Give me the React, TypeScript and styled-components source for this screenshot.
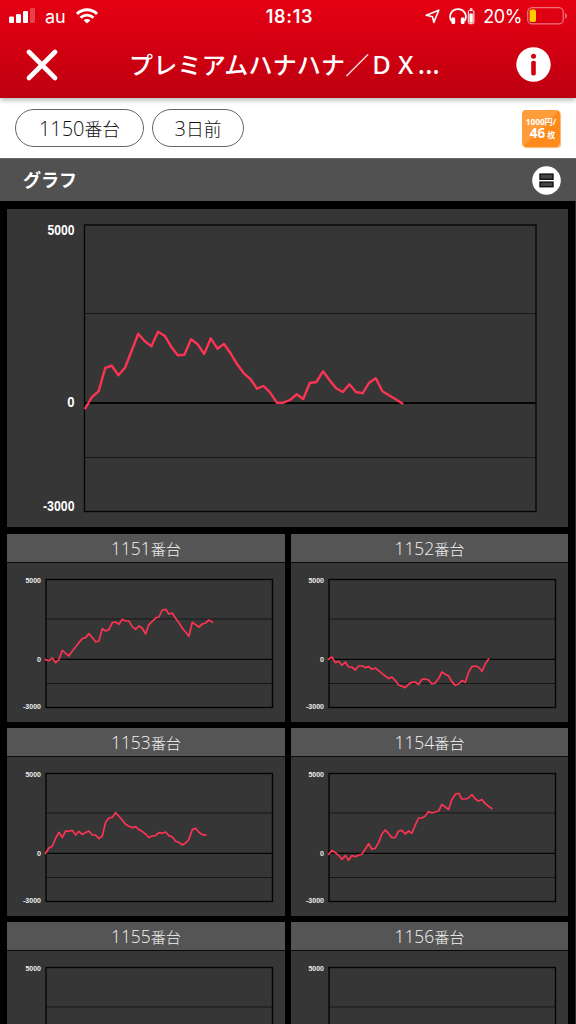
import React from "react";
import styled, { createGlobalStyle } from "styled-components";

const GlobalStyle = createGlobalStyle`
  * { box-sizing: border-box; }
  html, body { margin: 0; height: 1024px; overflow: hidden; background: #000; }
  body { font-family: Inter, "Noto Sans CJK JP", sans-serif; }
  svg { display: block; flex: none; }
`;

const Screen = styled.div`
  width: 576px;
  height: 1024px;
  overflow: hidden;
  display: flex;
  flex-direction: column;
  background: #000;
`;

const Header = styled.header`
  flex: none;
  height: 98px;
  background: linear-gradient(#e60013, #bd0010);
  border-bottom: 1px solid #b0000c;
  box-shadow: 0 2px 5px rgba(0, 0, 0, 0.3);
  position: relative;
  z-index: 1;
  color: #fff;
`;

const StatusBar = styled.div`
  height: 32px;
  display: grid;
  grid-template-columns: 1fr auto 1fr;
  align-items: center;
  padding: 0 8px 0 9px;
`;

const StatusGroup = styled.div<{ $end?: boolean }>`
  display: flex;
  align-items: center;
  justify-content: ${(p) => (p.$end ? "flex-end" : "flex-start")};
`;

const Carrier = styled.span`
  font-size: 18px;
  line-height: 30px;
  padding-top: 2px;
  margin: 0 11px 0 10px;
  letter-spacing: -0.2px;
`;

const Clock = styled.span`
  font-size: 18px;
  font-weight: 600;
  line-height: 30px;
  letter-spacing: 0.7px;
  padding: 2px 0 0 2px;
`;

const BatteryText = styled.span`
  font-size: 18px;
  line-height: 30px;
  padding-top: 2px;
  margin: 0 5px 0 8px;
  letter-spacing: -0.4px;
`;

const IconGap = styled.span`
  width: 9px;
`;

const NavBar = styled.div`
  height: 65px;
  display: grid;
  grid-template-columns: 44px 1fr 44px;
  align-items: center;
  padding: 0 21px 0 20px;
`;

const Title = styled.h1`
  margin: 0;
  padding: 0 6px 2px 0;
  font: 500 24px/36px "Noto Sans CJK JP", sans-serif;
  letter-spacing: 0.2px;
  text-align: center;
  white-space: nowrap;
`;

const NavButton = styled.button`
  border: 0;
  padding: 0;
  background: none;
  display: flex;
  justify-content: center;
`;

const FilterBar = styled.div`
  flex: none;
  height: 60px;
  background: #fff;
  display: flex;
  align-items: center;
  gap: 8px;
  padding: 0 16px 0 15px;
`;

const Digits = styled.span<{ $size: number }>`
  font-family: "Open Sans", sans-serif;
  font-weight: 300;
  font-size: ${(p) => p.$size}px;
  letter-spacing: 0;
`;

const Pill = styled.button<{ $width: number }>`
  width: ${(p) => p.$width}px;
  height: 38px;
  padding: 0;
  border: 1px solid #666;
  border-radius: 19px;
  background: #fff;
  color: #111;
  font: 300 17.8px/36px "Noto Sans CJK JP", sans-serif;
`;

const RateBadge = styled.div`
  width: 38px;
  height: 37px;
  margin-left: auto;
  padding-top: 6px;
  border-radius: 4px;
  background: linear-gradient(135deg, #ff9d3c 50%, #ff8a1c 50%);
  box-shadow: 1px 1px 1px #f3b777;
  color: #fff;
  text-align: center;
  font-family: "Open Sans", "Noto Sans CJK JP", sans-serif;
  font-weight: 700;
`;

const RatePrice = styled.div`
  font-size: 8.2px;
  line-height: 12px;
  white-space: nowrap;
`;

const RateCount = styled.div`
  display: flex;
  align-items: baseline;
  justify-content: center;
  gap: 2px;
  padding-left: 3px;
  font-size: 13.5px;
  line-height: 11px;
`;

const RateUnit = styled.span`
  font-size: 8px;
`;

const SectionBar = styled.div`
  flex: none;
  height: 43px;
  background: #515151;
  border-top: 1px solid #6b6b6b;
  display: flex;
  align-items: center;
  justify-content: space-between;
  padding: 0 15px 0 23px;
`;

const SectionTitle = styled.h2`
  margin: 0;
  padding-bottom: 3px;
  color: #fff;
  font: 700 18px/26px "Noto Sans CJK JP", sans-serif;
`;

const Board = styled.main`
  flex: none;
  padding: 8px 7px 0 7px;
  border-right: 1px solid #2c2c2c;
  display: flex;
  flex-direction: column;
  gap: 7px;
`;

const MainPanel = styled.section`
  height: 318px;
  background: #363636;
`;

const PanelGrid = styled.div`
  display: grid;
  grid-template-columns: 278px 277px;
  column-gap: 6px;
  row-gap: 6px;
`;

const Panel = styled.section`
  height: 188px;
  background: #363636;

  &:nth-child(even) svg {
    margin-left: -0.7px;
  }
`;

const PanelTitle = styled.h3`
  margin: 0;
  height: 29px;
  background: #555;
  border-bottom: 1px solid #0a0a0a;
  color: #f2f2f2;
  text-align: center;
  font: 300 15.2px/28px "Noto Sans CJK JP", sans-serif;
`;

const AxisLabel = styled.text<{ $large?: boolean }>`
  font-family: "Liberation Sans", sans-serif;
  font-weight: 700;
  font-size: ${(p) => (p.$large ? 14 : 7.8)}px;
  fill: ${(p) => (p.$large ? "#fff" : "#eee")};
`;

type ChartSpec = {
  width: number;
  height: number;
  left: number;
  right: number;
  top: number;
  upper: number;
  zero: number;
  lower: number;
  bottom: number;
  step: number;
  labelX: number;
  labelWidths: [number, number, number];
  labelY: [number, number, number];
  large?: boolean;
};

const LARGE: ChartSpec = {
  width: 561, height: 318, left: 77.5, right: 529, top: 16, upper: 104.5, zero: 194,
  lower: 248.5, bottom: 302.5, step: 6.6, labelX: 67.5, labelWidths: [27, 7.3, 31.5],
  labelY: [25.5, 198, 302], large: true,
};

const SMALL: ChartSpec = {
  width: 278, height: 159, left: 39, right: 265.5, top: 16.5, upper: 56, zero: 96.3,
  lower: 120.5, bottom: 144.5, step: 3.333, labelX: 34, labelWidths: [15.5, 4, 18],
  labelY: [20.4, 99, 145.6],
};

// Line heights are measured from the zero line, three units to a pixel.
const MAIN_DATA = [
  -15, 18, 35, 105, 112, 83, 106, 156, 208, 185, 170, 214, 202, 169, 143, 145, 191, 176, 147, 194,
  163, 177, 149, 116, 89, 72, 43, 51, 31, 1, 1, 9, 26, 12, 60, 63, 95, 68, 44, 33, 56, 33, 29, 61,
  74, 35, 23, 11, -1,
];

const MACHINES: { id: string; data: number[] }[] = [
  {
    id: "1151",
    data: [
      -1, -4, 4, -10, -1, 27, 18, 10, 25, 37, 50, 62, 65, 77, 65, 52, 55, 92, 85, 89, 110, 112, 105,
      120, 115, 115, 98, 90, 100, 93, 76, 104, 114, 124, 127, 148, 150, 136, 139, 123, 110, 93, 82,
      69, 111, 104, 97, 106, 109, 118, 111,
    ],
  },
  {
    id: "1152",
    data: [
      0, 7, -10, -6, -18, -8, -23, -23, -32, -20, -20, -25, -22, -30, -26, -34, -42, -50, -58, -53,
      -64, -77, -81, -85, -75, -69, -68, -76, -60, -59, -62, -74, -71, -58, -38, -45, -50, -67, -78,
      -74, -64, -69, -39, -22, -20, -24, -36, -14, 1,
    ],
  },
  {
    id: "1153",
    data: [
      0, 16, 21, 45, 63, 47, 67, 66, 69, 55, 66, 56, 62, 67, 55, 55, 44, 52, 93, 106, 108, 122, 111,
      100, 87, 81, 77, 80, 71, 65, 58, 47, 52, 53, 62, 60, 64, 53, 49, 36, 33, 25, 31, 41, 71, 75,
      63, 56, 55,
    ],
  },
  {
    id: "1154",
    data: [
      -3, 8, 2, -6, -18, -7, -21, -7, -10, -6, -3, 13, 29, 12, 15, 32, 58, 70, 59, 47, 48, 67, 69,
      58, 67, 60, 85, 106, 106, 112, 125, 121, 124, 127, 147, 139, 131, 161, 177, 180, 163, 163,
      166, 176, 163, 157, 161, 149, 141, 134,
    ],
  },
  { id: "1155", data: [] },
  { id: "1156", data: [] },
];

function Chart({ spec, data }: { spec: ChartSpec; data: number[] }) {
  const s = spec;
  const labels = ["5000", "0", "-3000"];
  const startX = s.large ? 78.4 : 38.6;
  const points = data.map((v, i) => `${(startX + i * s.step).toFixed(1)},${(s.zero - v / 3).toFixed(1)}`).join(" ");
  return (
    <svg width={s.width} height={s.height} viewBox={`0 0 ${s.width} ${s.height}`}>
      <g fill="none" stroke="#050505">
        <path d={`M${s.left} ${s.upper}H${s.right}M${s.left} ${s.lower}H${s.right}`} strokeWidth="1" stroke="#171717" />
        <path d={`M${s.left} ${s.zero}H${s.right}`} strokeWidth={s.large ? 1.8 : 1.2} />
        <rect x={s.left} y={s.top} width={s.right - s.left} height={s.bottom - s.top} strokeWidth={s.large ? 1.3 : 1.4} />
      </g>
      {labels.map((label, i) => (
        <AxisLabel key={label} $large={s.large} x={s.labelX - s.labelWidths[i]} y={s.labelY[i]}
          textLength={s.labelWidths[i]} lengthAdjust="spacingAndGlyphs">
          {label}
        </AxisLabel>
      ))}
      <polyline points={points} fill="none" stroke="#fb3453" strokeWidth={s.large ? 2.4 : 1.7} strokeLinejoin="round" strokeLinecap="square" />
    </svg>
  );
}

const SignalIcon = () => (
  <svg width="26" height="16" viewBox="0 0 26 16" fill="#fff">
    <rect x="0" y="8.5" width="5" height="6.5" rx="1.3" />
    <rect x="7" y="6" width="5" height="9" rx="1.3" />
    <rect x="14" y="3" width="5" height="12" rx="1.3" />
    <rect x="21" y="0" width="5" height="15" rx="1.3" opacity="0.25" />
  </svg>
);

const WifiIcon = () => (
  <svg width="22" height="16" viewBox="0 0 22 16" fill="none" stroke="#fff" strokeWidth="2.9">
    <path d="M1 5.9C6.6.3 15.4.3 21 5.9" />
    <path d="M4.6 9.7c3.6-3.5 9.2-3.5 12.8 0" />
    <path d="M11 15.6 7.6 12.3c1.9-1.7 4.9-1.7 6.8 0z" fill="#fff" stroke="none" />
  </svg>
);

const LocationIcon = () => (
  <svg width="15" height="15" viewBox="0 0 15 15" fill="none" stroke="#fff" strokeWidth="1.6" strokeLinejoin="round">
    <path d="M13.8 1.2 8.8 13.4 7.5 7.8 1.2 6.3z" />
  </svg>
);

const HeadphonesIcon = () => (
  <svg width="26" height="17" viewBox="0 0 26 17" fill="none" stroke="#fff">
    <path d="M2.4 13C-1.2 6.5 3.4 1.2 9 1.2s10.2 5.3 6.6 11.8" strokeWidth="1.8" />
    <rect x="2.4" y="9.6" width="3.8" height="6.4" rx="1.3" fill="#fff" stroke="none" />
    <rect x="11.8" y="9.6" width="3.8" height="6.4" rx="1.3" fill="#fff" stroke="none" />
    <rect x="19.3" y="2.5" width="5.6" height="13.2" rx="1.4" strokeWidth="1" />
    <path d="M20.8 1h2.6" strokeWidth="1.4" />
    <rect x="20.4" y="5.5" width="3.4" height="9.2" fill="#fff" stroke="none" />
  </svg>
);

const BatteryIcon = () => (
  <svg width="41" height="18" viewBox="0 0 41 18">
    <rect x="0.7" y="0.7" width="35.6" height="16.2" rx="4.5" fill="none" stroke="#fff" strokeOpacity="0.45" strokeWidth="1.3" />
    <rect x="2.6" y="2.6" width="6.4" height="12.4" rx="1.8" fill="#ffcc00" />
    <path d="M38.2 6c2.2.8 2.2 5 0 5.8z" fill="#fff" opacity="0.5" />
  </svg>
);

const CloseIcon = () => (
  <svg width="32" height="32" viewBox="0 0 32 32" stroke="#fff" strokeWidth="4.6" strokeLinecap="round">
    <path d="M3 3 29 29M29 3 3 29" />
  </svg>
);

const InfoIcon = () => (
  <svg width="35" height="35" viewBox="0 0 35 35">
    <circle cx="17.5" cy="17.5" r="17.2" fill="#fff" />
    <circle cx="17.5" cy="9.3" r="2.5" fill="#d0000f" />
    <rect x="15.2" y="13.7" width="4.6" height="14.8" rx="1.8" fill="#d0000f" />
  </svg>
);

const LayoutIcon = () => (
  <svg width="29" height="29" viewBox="0 0 29 29">
    <circle cx="14.5" cy="14.5" r="14.3" fill="#fff" />
    <rect x="8" y="8.1" width="13" height="5.2" fill="#444" stroke="#111" strokeWidth="1.4" />
    <rect x="8" y="16.1" width="13" height="4.6" fill="#444" stroke="#111" strokeWidth="1.4" />
  </svg>
);

export default function App() {
  return (
    <Screen>
      <GlobalStyle />
      <Header>
        <StatusBar>
          <StatusGroup>
            <SignalIcon />
            <Carrier>au</Carrier>
            <WifiIcon />
          </StatusGroup>
          <Clock>18:13</Clock>
          <StatusGroup $end>
            <LocationIcon />
            <IconGap />
            <HeadphonesIcon />
            <BatteryText>20%</BatteryText>
            <BatteryIcon />
          </StatusGroup>
        </StatusBar>
        <NavBar>
          <NavButton aria-label="閉じる"><CloseIcon /></NavButton>
          <Title>プレミアムハナハナ／ＤＸ...</Title>
          <NavButton aria-label="情報"><InfoIcon /></NavButton>
        </NavBar>
      </Header>
      <FilterBar>
        <Pill $width={129}><Digits $size={20}>1150</Digits>番台</Pill>
        <Pill $width={92}><Digits $size={20}>3</Digits>日前</Pill>
        <RateBadge>
          <RatePrice>1000円/</RatePrice>
          <RateCount>46<RateUnit>枚</RateUnit></RateCount>
        </RateBadge>
      </FilterBar>
      <SectionBar>
        <SectionTitle>グラフ</SectionTitle>
        <LayoutIcon />
      </SectionBar>
      <Board>
        <MainPanel>
          <Chart spec={LARGE} data={MAIN_DATA} />
        </MainPanel>
        <PanelGrid>
          {MACHINES.map((m) => (
            <Panel key={m.id}>
              <PanelTitle><Digits $size={17.4}>{m.id}</Digits>番台</PanelTitle>
              <Chart spec={SMALL} data={m.data} />
            </Panel>
          ))}
        </PanelGrid>
      </Board>
    </Screen>
  );
}
